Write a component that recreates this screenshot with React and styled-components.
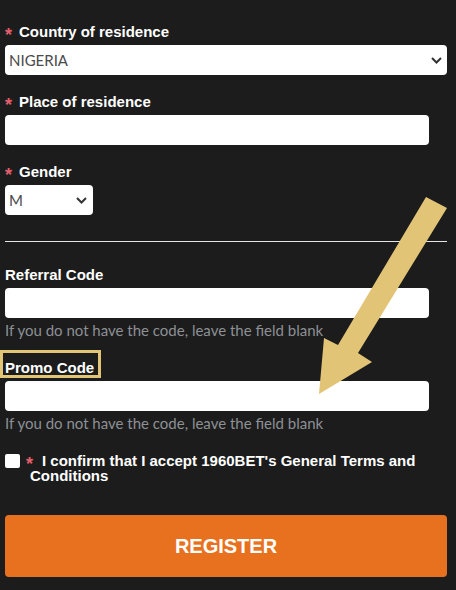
import React from 'react';
import styled, { createGlobalStyle } from 'styled-components';

const GlobalStyle = createGlobalStyle`
  body {
    margin: 0;
    background: #1c1c1c;
  }
`;

const Page = styled.div`
  position: relative;
  width: 456px;
  height: 590px;
  box-sizing: border-box;
  padding: 23px 9px 0 5px;
  background: #1c1c1c;
  overflow: hidden;
`;

const Field = styled.div`
  margin-top: ${(p) => p.$top || 0}px;
`;

const Label = styled.div`
  font-family: "Liberation Sans", Arial, sans-serif;
  font-weight: bold;
  font-size: 15px;
  line-height: 17px;
  color: #ffffff;
  margin-bottom: 5px;
`;

const Highlight = styled.span`
  position: relative;
  display: inline-block;
  &::before {
    content: '';
    position: absolute;
    top: -9px;
    left: -5px;
    right: -7px;
    bottom: -2px;
    border: 3px solid #e2c477;
  }
`;

const Star = styled.span`
  position: relative;
  top: 4px;
  display: inline-block;
  width: ${(p) => p.$w || 14}px;
  text-indent: 0;
  font-size: 18px;
  line-height: 10px;
  color: #e45f6c;
`;

const SelectWrap = styled.div`
  position: relative;
  width: ${(p) => p.$width || '100%'};
`;

const Select = styled.select`
  appearance: none;
  display: block;
  width: 100%;
  height: 30px;
  border: none;
  border-radius: 4px;
  background: #ffffff;
  padding: 0 0 0 4px;
  font-family: Lato, "Open Sans", sans-serif;
  font-size: 15px;
  color: #4a4a4a;
  outline: none;
`;

const Chevron = styled.svg`
  position: absolute;
  right: ${(p) => p.$right}px;
  top: 12px;
  pointer-events: none;
`;

const TextInput = styled.input`
  display: block;
  box-sizing: border-box;
  width: 424px;
  height: 30px;
  border: none;
  border-radius: 4px;
  background: #ffffff;
  outline: none;
`;

const Helper = styled.div`
  margin-top: 2px;
  font-family: Lato, "Open Sans", sans-serif;
  font-size: 15px;
  line-height: 20px;
  color: #8d9095;
`;

const Divider = styled.div`
  margin-top: 26px;
  height: 1px;
  background: #e6e6e6;
`;

const CheckRow = styled.label`
  display: flex;
  align-items: flex-start;
  margin-top: 20px;
`;

const Check = styled.input`
  appearance: none;
  flex: none;
  width: 15px;
  height: 14px;
  margin: 1px 10px 0 0;
  border-radius: 2px;
  background: #ffffff;
`;

const CheckText = styled.div`
  text-indent: -4px;
  font-family: "Liberation Sans", Arial, sans-serif;
  font-weight: bold;
  font-size: 15px;
  line-height: 15px;
  color: #ffffff;
`;

const RegisterButton = styled.button`
  display: block;
  width: 100%;
  height: 62px;
  margin-top: 32px;
  border: none;
  border-radius: 4px;
  background: #e8711f;
  color: #ffffff;
  font-family: "Liberation Sans", Arial, sans-serif;
  font-weight: bold;
  font-size: 20px;
  cursor: pointer;
`;

const Arrow = styled.svg`
  position: absolute;
  top: 0;
  left: 0;
  pointer-events: none;
`;

const Caret = ({ right }) => (
    <Chevron $right={right} width="11" height="7" viewBox="0 0 11 7">
        <path d="M1 1 L5.5 5.5 L10 1" fill="none" stroke="#333" strokeWidth="2" />
    </Chevron>
);

const App = () => {
    return (
        <Page>
            <GlobalStyle />
            <Field>
                <Label><Star>*</Star>Country of residence</Label>
                <SelectWrap>
                    <Select defaultValue="NG">
                        <option value="NG">NIGERIA</option>
                    </Select>
                    <Caret right={5} />
                </SelectWrap>
            </Field>
            <Field $top={18}>
                <Label><Star>*</Star>Place of residence</Label>
                <TextInput type="text" />
            </Field>
            <Field $top={18}>
                <Label><Star>*</Star>Gender</Label>
                <SelectWrap $width="88px">
                    <Select defaultValue="M">
                        <option value="M">M</option>
                        <option value="F">F</option>
                    </Select>
                    <Caret right={6} />
                </SelectWrap>
            </Field>
            <Divider />
            <Field $top={24}>
                <Label>Referral Code</Label>
                <TextInput type="text" />
                <Helper>If you do not have the code, leave the field blank</Helper>
            </Field>
            <Field $top={19}>
                <Label><Highlight>Promo Code</Highlight></Label>
                <TextInput type="text" />
                <Helper>If you do not have the code, leave the field blank</Helper>
            </Field>
            <CheckRow>
                <Check type="checkbox" />
                <CheckText><Star $w={16}>*</Star>I confirm that I accept 1960BET's General Terms and Conditions</CheckText>
            </CheckRow>
            <RegisterButton type="submit">REGISTER</RegisterButton>
            <Arrow width="456" height="590" viewBox="0 0 456 590">
                <polygon points="426,197 447,208 358,353 372,362 319,394 324,338 338,345" fill="#e2c477" />
            </Arrow>
        </Page>
    );
}

export default App;
